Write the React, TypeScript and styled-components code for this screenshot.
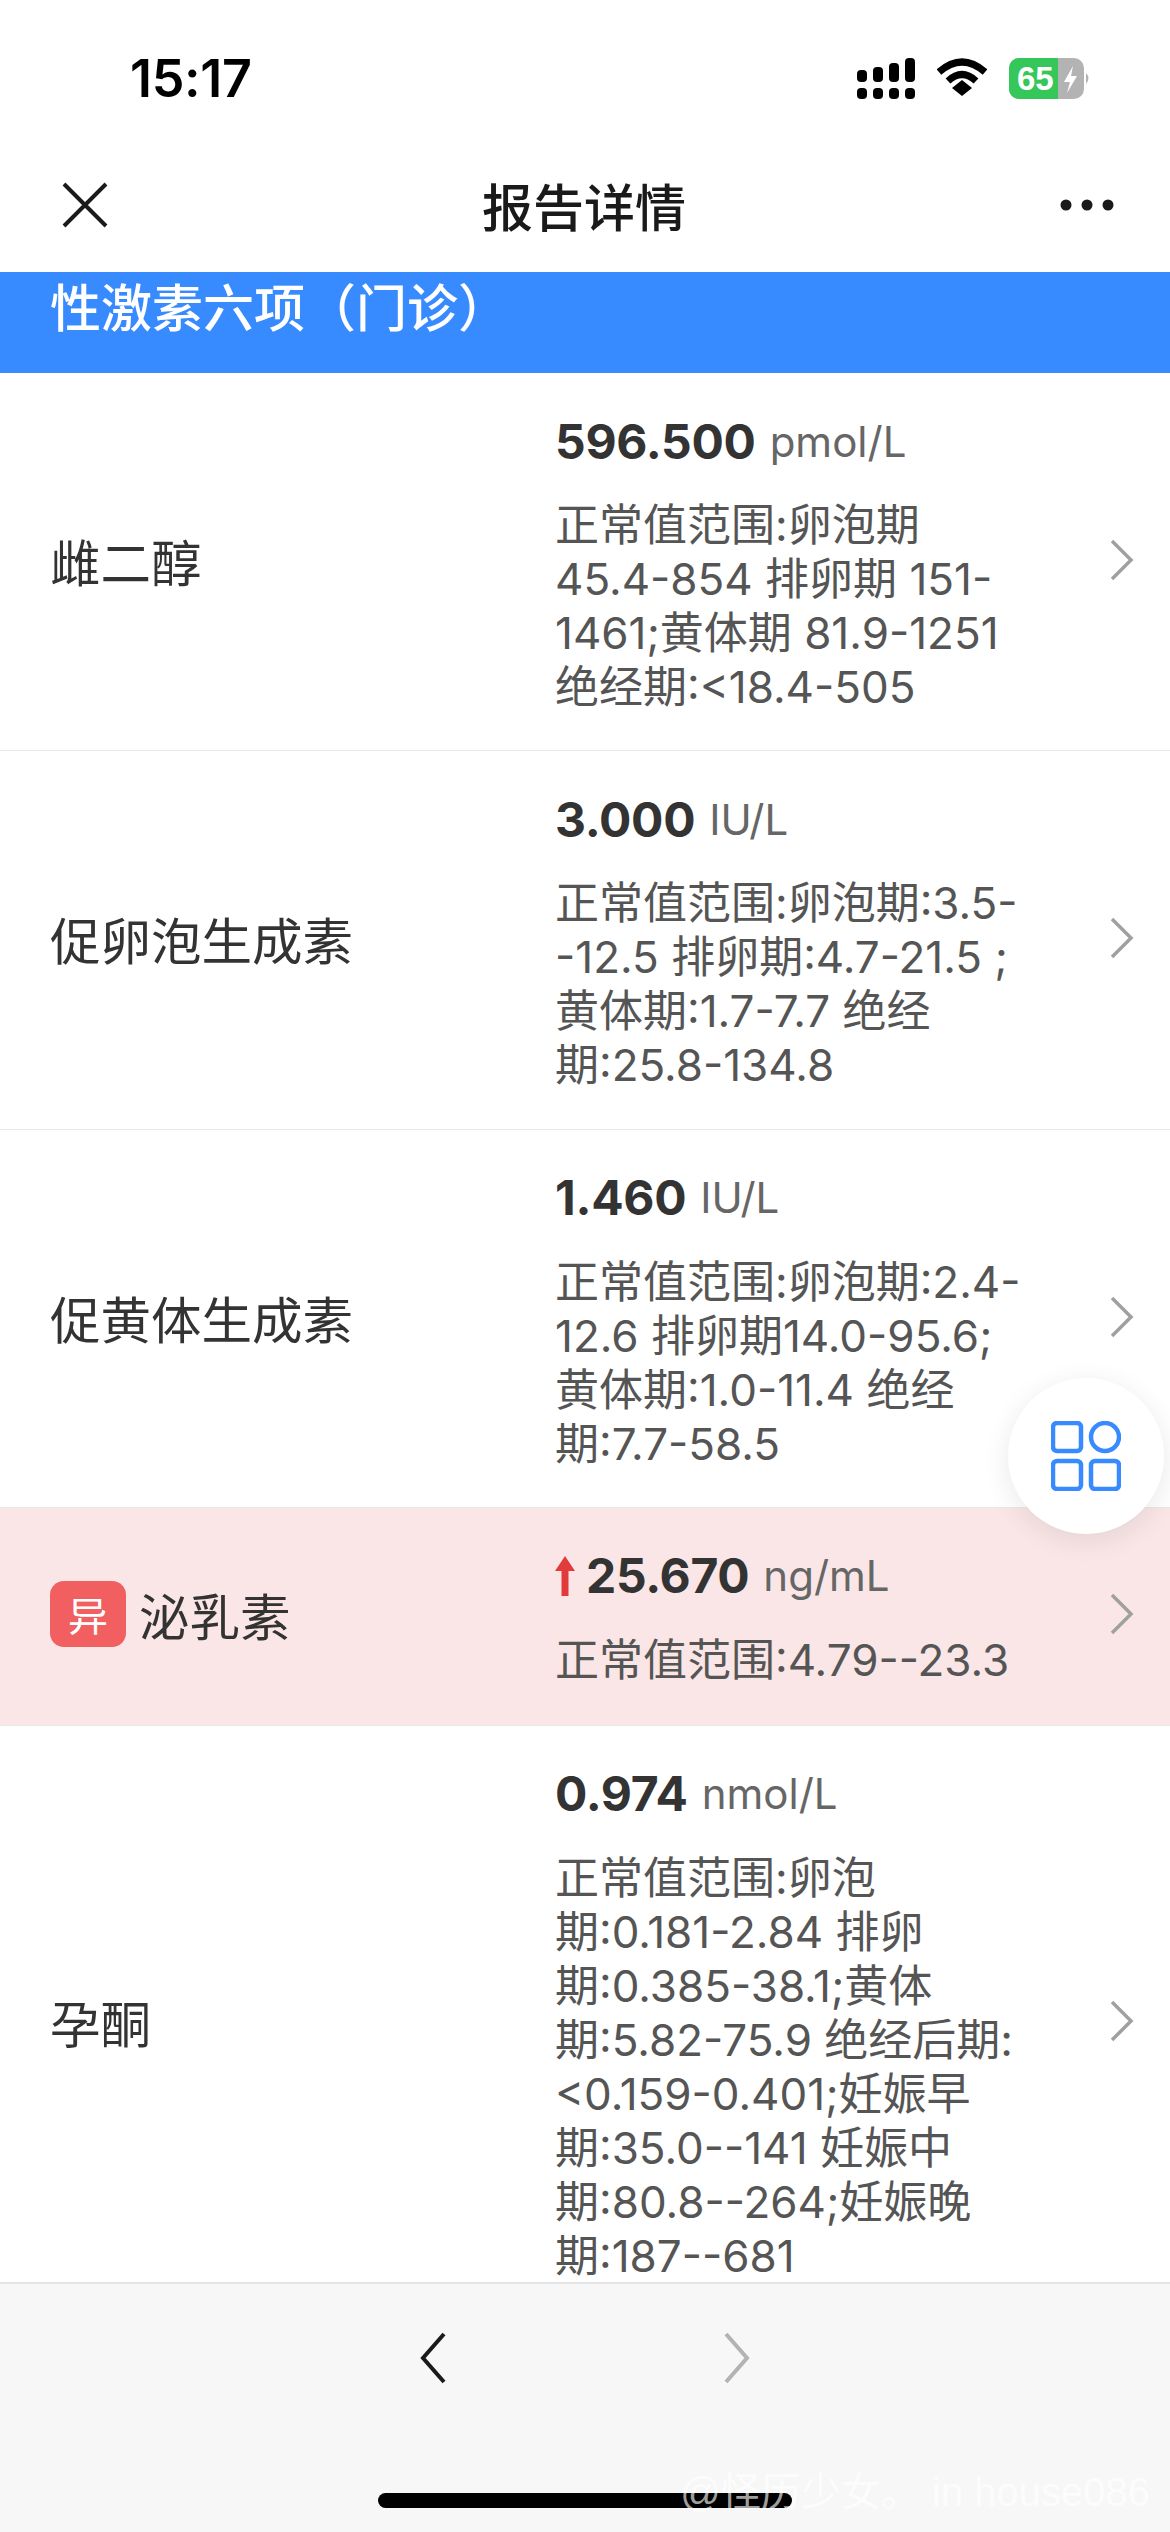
import React from 'react';
import styled, { createGlobalStyle } from 'styled-components';

const GlobalStyle = createGlobalStyle`
    html, body {
        margin: 0;
        padding: 0;
        background: #fff;
        font-family: "Inter", "Noto Sans CJK SC", sans-serif;
    }
`;

const Screen = styled.div`
    position: relative;
    display: flex;
    flex-direction: column;
    width: 1170px;
    height: 2532px;
    overflow: hidden;
    background: #fff;
`;

const StatusBar = styled.div`
    display: flex;
    align-items: center;
    justify-content: space-between;
    height: 156px;
    padding: 0 79px 0 130px;
    box-sizing: border-box;
`;

const Clock = styled.div`
    font-size: 52px;
    font-weight: 600;
    letter-spacing: -0.3px;
    color: #000;
`;

const StatusIcons = styled.div`
    display: flex;
    align-items: center;
    gap: 22px;
`;

const NavBar = styled.div`
    display: flex;
    align-items: center;
    justify-content: space-between;
    height: 116px;
    padding: 0 56px 18px 62px;
    box-sizing: border-box;
`;

const NavTitle = styled.div`
    font-size: 51px;
    font-weight: 500;
    color: #1a1a1a;
`;

const SectionHeader = styled.div`
    height: 101px;
    padding: 7px 50px 0;
    box-sizing: border-box;
    background: #388aff;
    color: #fff;
    font-size: 51px;
    font-weight: 500;
    line-height: 60px;
`;

const List = styled.div`
    flex: 1;
    min-height: 0;
    overflow: hidden;
`;

const Row = styled.div<{ $abnormal?: boolean }>`
    display: flex;
    align-items: center;
    padding: 33px 0 ${(p) => (p.$abnormal ? '38px' : '36.33px')};
    border-bottom: 1px solid #e8e8e8;
    background: ${(p) => (p.$abnormal ? '#fae6e6' : '#fff')};
`;

const RowName = styled.div`
    display: flex;
    align-items: center;
    gap: 13px;
    width: 555px;
    padding-left: 50px;
    box-sizing: border-box;
    font-size: 50.5px;
    color: #333;
`;

const Badge = styled.span`
    display: flex;
    align-items: center;
    justify-content: center;
    width: 76px;
    height: 66px;
    border-radius: 14px;
    background: #f15f60;
    color: #fff;
    font-size: 40px;
`;

const RowBody = styled.div`
    flex: 1;
`;

const ValueLine = styled.div`
    display: flex;
    align-items: center;
    height: 70px;
    margin-bottom: 22px;
    color: #666;
    font-size: 42px;
`;

const UpArrow = styled.svg`
    flex: none;
    margin-right: 11px;
`;

const Value = styled.span`
    margin-right: 14px;
    font-size: 48px;
    font-weight: 700;
    letter-spacing: -0.3px;
    color: #333;
`;

const Range = styled.div`
    font-size: 44px;
    line-height: 54px;
    color: #555;
    white-space: nowrap;
`;

const RowChevron = styled.svg`
    flex: none;
    margin-right: 36px;
`;

const FloatButton = styled.div`
    position: absolute;
    left: 1008px;
    top: 1378px;
    display: flex;
    align-items: center;
    justify-content: center;
    width: 156px;
    height: 156px;
    border-radius: 50%;
    background: #fff;
    box-shadow: 0 6px 28px rgba(0, 0, 0, 0.09);
`;

const BottomBar = styled.div`
    position: relative;
    display: flex;
    justify-content: center;
    gap: 276px;
    height: 250px;
    padding-top: 48px;
    box-sizing: border-box;
    background: #f7f7f7;
    border-top: 2px solid #e5e5e5;
`;

const PagerChevron = styled.svg`
    flex: none;
`;

const HomeIndicator = styled.div`
    position: absolute;
    left: 378px;
    bottom: 24px;
    width: 414px;
    height: 15px;
    border-radius: 8px;
    background: #000;
`;

const Watermark = styled.div`
    position: absolute;
    right: 20px;
    bottom: 14px;
    font-family: "Liberation Sans", "Noto Sans CJK SC", sans-serif;
    font-size: 40px;
    color: rgba(255, 255, 255, 0.65);
    white-space: nowrap;
`;

type Item = {
    name: string;
    value: string;
    unit: string;
    range: string[];
    abnormal?: boolean;
};

const items: Item[] = [
    {
        name: '雌二醇',
        value: '596.500',
        unit: 'pmol/L',
        range: ['正常值范围:卵泡期', '45.4-854 排卵期 151-', '1461;黄体期 81.9-1251', '绝经期:<18.4-505'],
    },
    {
        name: '促卵泡生成素',
        value: '3.000',
        unit: 'IU/L',
        range: ['正常值范围:卵泡期:3.5-', '-12.5 排卵期:4.7-21.5 ;', '黄体期:1.7-7.7 绝经', '期:25.8-134.8'],
    },
    {
        name: '促黄体生成素',
        value: '1.460',
        unit: 'IU/L',
        range: ['正常值范围:卵泡期:2.4-', '12.6 排卵期14.0-95.6;', '黄体期:1.0-11.4 绝经', '期:7.7-58.5'],
    },
    {
        name: '泌乳素',
        value: '25.670',
        unit: 'ng/mL',
        range: ['正常值范围:4.79--23.3'],
        abnormal: true,
    },
    {
        name: '孕酮',
        value: '0.974',
        unit: 'nmol/L',
        range: [
            '正常值范围:卵泡',
            '期:0.181-2.84 排卵',
            '期:0.385-38.1;黄体',
            '期:5.82-75.9 绝经后期:',
            '<0.159-0.401;妊娠早',
            '期:35.0--141 妊娠中',
            '期:80.8--264;妊娠晚',
            '期:187--681',
        ],
    },
];

const signalTops = [12, 9, 5, 0];

const App = () => (
    <Screen>
        <GlobalStyle />
        <StatusBar>
            <Clock>15:17</Clock>
            <StatusIcons>
                <svg width="58" height="41" viewBox="0 0 58 41">
                    {signalTops.map((top, i) => (
                        <g key={top} fill="#000">
                            <rect x={i * 16} y={30} width="10" height="11" rx="4" />
                            <rect x={i * 16} y={top} width="10" height={24 - top} rx="4" />
                        </g>
                    ))}
                </svg>
                <svg width="50" height="40" viewBox="0 0 50 40">
                    <path d="M2 14 Q25 -6 48 14" fill="none" stroke="#000" strokeWidth="7" />
                    <path d="M11 23 Q25 10 39 23" fill="none" stroke="#000" strokeWidth="7" />
                    <path d="M15 30 L25 22 L35 30 L25 38 Z" fill="#000" />
                </svg>
                <svg width="82" height="41" viewBox="0 0 82 41">
                    <rect x="0" y="0" width="75" height="41" rx="10" fill="#b3b3b3" />
                    <path d="M10 0 H49 V41 H10 A10 10 0 0 1 0 31 V10 A10 10 0 0 1 10 0 Z" fill="#35c759" />
                    <text x="8" y="32" fontSize="33" fontWeight="700" fontFamily="Liberation Sans" fill="#fff">
                        65
                    </text>
                    <path d="M64 8 L55 24 H61 L58 35 L68 18 H62 Z" fill="#fff" />
                    <path d="M77 15 Q82 20 77 26 Z" fill="#b3b3b3" />
                </svg>
            </StatusIcons>
        </StatusBar>
        <NavBar>
            <svg width="46" height="46" viewBox="0 0 46 46">
                <path d="M2 2 L44 44 M44 2 L2 44" stroke="#1a1a1a" strokeWidth="4" fill="none" />
            </svg>
            <NavTitle>报告详情</NavTitle>
            <svg width="54" height="14" viewBox="0 0 54 14">
                <circle cx="6" cy="7" r="5.5" fill="#1a1a1a" />
                <circle cx="27" cy="7" r="5.5" fill="#1a1a1a" />
                <circle cx="48" cy="7" r="5.5" fill="#1a1a1a" />
            </svg>
        </NavBar>
        <SectionHeader>性激素六项（门诊）</SectionHeader>
        <List>
            {items.map((item) => (
                <Row key={item.name} $abnormal={item.abnormal}>
                    <RowName>
                        {item.abnormal && <Badge>异</Badge>}
                        {item.name}
                    </RowName>
                    <RowBody>
                        <ValueLine>
                            {item.abnormal && (
                                <UpArrow width="20" height="40" viewBox="0 0 20 40">
                                    <path d="M10 0 L20 15 H13.5 V40 H6.5 V15 H0 Z" fill="#e23b3b" />
                                </UpArrow>
                            )}
                            <Value>{item.value}</Value>
                            {item.unit}
                        </ValueLine>
                        <Range>
                            {item.range.map((line) => (
                                <div key={line}>{line}</div>
                            ))}
                        </Range>
                    </RowBody>
                    <RowChevron width="24" height="42" viewBox="0 0 24 42">
                        <path d="M2 2 L21 21 L2 40" fill="none" stroke="#a0a0a0" strokeWidth="3.5" />
                    </RowChevron>
                </Row>
            ))}
        </List>
        <BottomBar>
            <PagerChevron width="28" height="52" viewBox="0 0 28 52">
                <path d="M25 2 L4 26 L25 50" fill="none" stroke="#1a1a1a" strokeWidth="4" />
            </PagerChevron>
            <PagerChevron width="28" height="52" viewBox="0 0 28 52">
                <path d="M3 2 L24 26 L3 50" fill="none" stroke="#b3b3b3" strokeWidth="4" />
            </PagerChevron>
            <HomeIndicator />
            <Watermark>@怪历少女。 in house086</Watermark>
        </BottomBar>
        <FloatButton>
            <svg width="70" height="70" viewBox="0 0 70 70">
                <g fill="none" stroke="#388aff" strokeWidth="4.5">
                    <rect x="2" y="2" width="28" height="28" rx="4" />
                    <circle cx="54" cy="16" r="14" />
                    <rect x="2" y="40" width="28" height="28" rx="4" />
                    <rect x="40" y="40" width="28" height="28" rx="4" />
                </g>
            </svg>
        </FloatButton>
    </Screen>
);

export default App;
